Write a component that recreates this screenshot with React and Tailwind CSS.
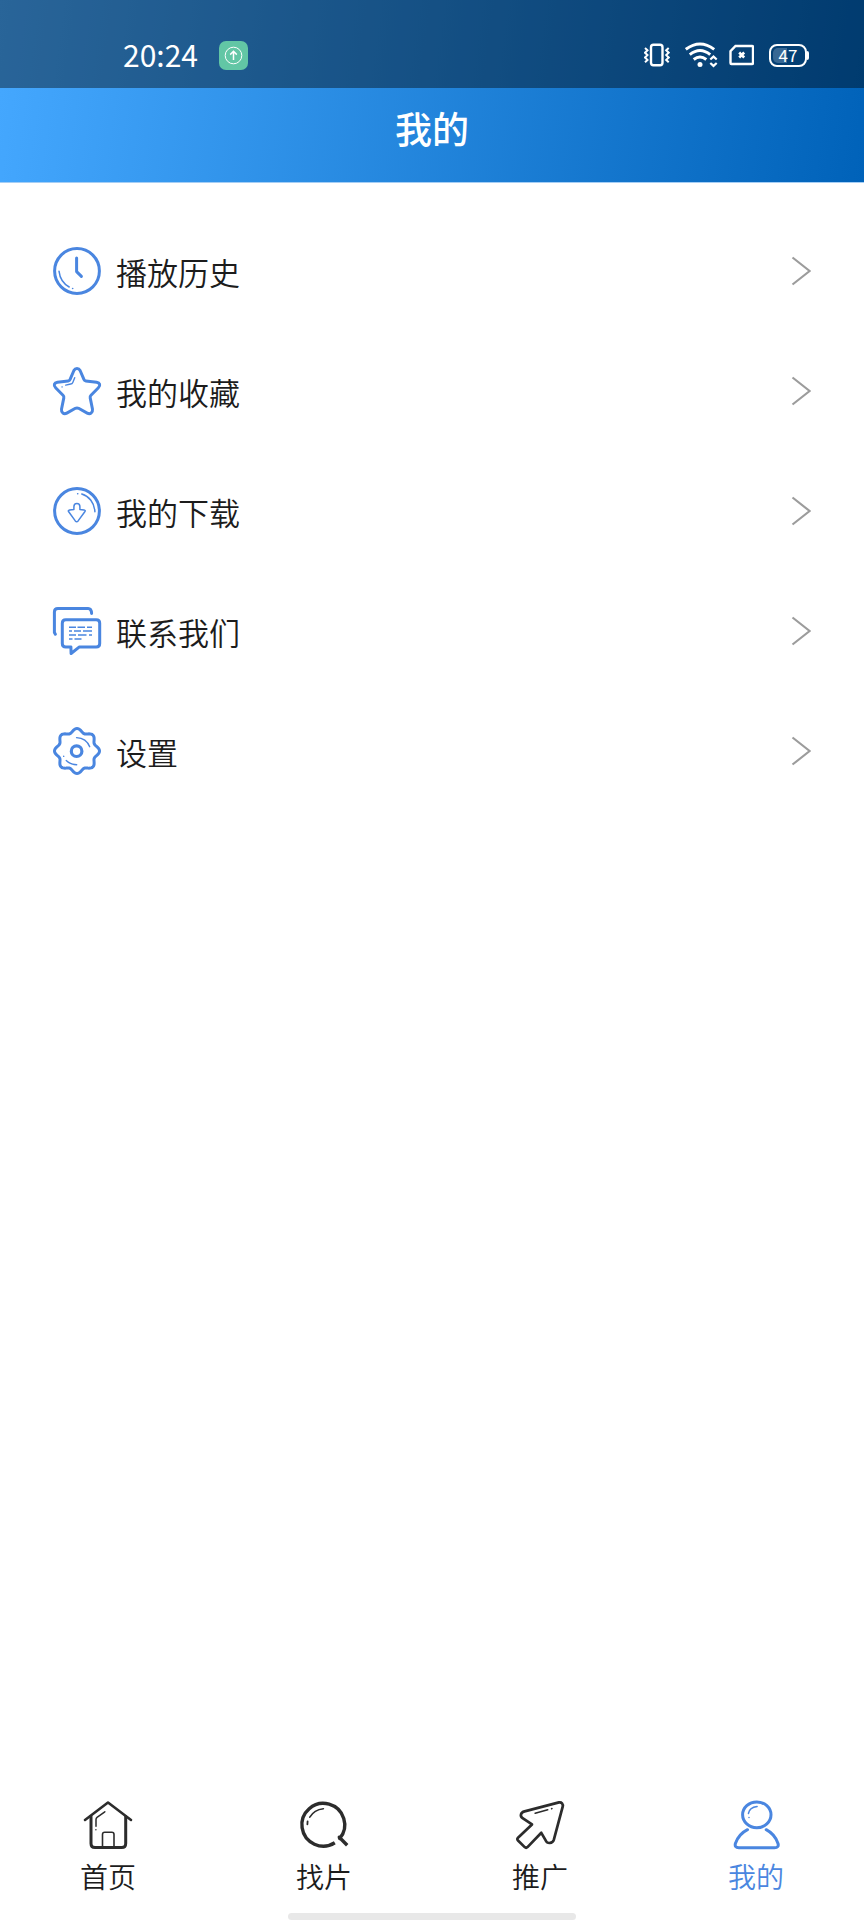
import React from 'react';

const ICON_BLUE = '#4a86e0';
const ICON_DARK = '#2c2c2c';

const Icon = ({ color = ICON_BLUE, children }) => (
  <svg
    className="block h-12 w-12 shrink-0 overflow-visible"
    viewBox="0 0 48 48"
    fill="none"
    stroke={color}
    strokeWidth="3"
    strokeLinecap="round"
    strokeLinejoin="round"
  >
    {children}
  </svg>
);

const ClockIcon = () => (
  <Icon>
    <circle cx="24" cy="24" r="22.4" />
    <path d="M23.6 11v13.6l4.800 4.800" />
    <path d="M6 24.200c.8 7 4.200 12.600 10.200 15.800" strokeWidth="1.500" />
    <path d="M19.600 41.500h.1" strokeWidth="1.600" />
  </Icon>
);

const StarIcon = () => (
  <Icon>
    <path d="M20.900 3.500C22.300 .7 25.700 .7 27.100 3.500L30.800 12.200Q31.300 13.700 32.800 13.900L43.600 15.200C46.900 15.700 47.700 18.500 45.400 20.700L38 28.200Q36.900 29.300 37.200 30.900L39.500 42.300C39.900 45.700 37.200 47.700 34.200 46.100L25.600 41.300Q24 40.500 22.400 41.300L13.800 46.100C10.800 47.700 8.100 45.700 8.500 42.300L10.800 30.900Q11.100 29.300 10 28.200L2.600 20.700C.3 18.500 1.100 15.700 4.400 15.200L15.200 13.900Q16.700 13.700 17.200 12.200Z" />
    <path d="M21.700 10.700l-1.900 4.700q-.6 1.400-2.100 1.600l-5 1.100M9 19.900h.2" strokeWidth="1.400" />
  </Icon>
);

const DownloadIcon = () => (
  <Icon>
    <circle cx="24" cy="24" r="22.400" />
    <path
      d="M20.900 22.400v-2.700q0-3.200 3-3.200t3 3.200v2.700l4.100.5q1.900.4.800 1.900l-6.700 9.100q-1.400 1.700-2.800 0l-6.600-9.100q-1-1.500.9-1.900z"
      strokeWidth="1.500"
    />
    <path d="M28.800 7C36 9.200 41.400 15.600 41.900 24.700M24.600 6.700h.2" strokeWidth="1.500" />
  </Icon>
);

const ChatIcon = () => (
  <Icon>
    <path d="M2.400 27.300L1.400 25.500V4.900q0-3.500 3.500-3.500h30.200q3.300 0 3.500 5" />
    <path d="M12.800 12.700h30.400q3.500 0 3.500 3.500v20.200q0 3.500-3.500 3.500H26.400l-8.300 6.600-.2-6.600h-5.100q-3.500 0-3.500-3.500V16.200q0-3.500 3.500-3.500z" />
    <g strokeWidth="1.500" strokeLinecap="butt">
      <path d="M16 20.300h7M24.500 20.300h7.500M34 20.300h5" />
      <path d="M16 24.100h3M21 24.100h7M30 24.100h9" />
      <path d="M16 28.100h7M25 28.100h8.500M36 28.100h3" />
      <path d="M16 32.100h3.500M21.500 32.100h7" />
    </g>
  </Icon>
);

// eight soft teeth around the hub
const gearPath = Array.from({ length: 144 }, (_, i) => {
  const a = (i / 144) * Math.PI * 2;
  const r = 20.6 + 1.9 * Math.cos(8 * a);
  return `${i ? 'L' : 'M'}${(24 + r * Math.cos(a)).toFixed(2)} ${(24 + r * Math.sin(a)).toFixed(2)}`;
}).join('') + 'Z';

const GearIcon = () => (
  <Icon>
    <path d={gearPath} />
    <circle cx="23.600" cy="24.200" r="5.300" strokeWidth="3.200" />
    <path d="M23.600 10.600c6.400.3 10.900 3.500 13.100 9.100M13.200 33.600q4.500 4.100 10.500 4.100M10.700 29.200v.2" strokeWidth="1.400" />
  </Icon>
);

const HomeIcon = ({ color }) => (
  <Icon color={color}>
    <path d="M1 19L24 1.500 47 19" strokeWidth="2.600" />
    <path d="M7 15.500v27.100q0 4 4 4h26.700q4 0 4-4V15.500" />
    <path d="M18.500 46V33.400q0-2.200 2.200-2.200h7.100q2.200 0 2.200 2.200V46" strokeWidth="1.600" />
    <path d="M20.800 10.800L13 16.300q-1 .8-1 2.100v6.800M11.900 28.700v.1" strokeWidth="1.500" />
  </Icon>
);

const SearchIcon = ({ color }) => (
  <Icon color={color}>
    <path d="M34.800 41.800A21.400 21.400 0 1 1 39.700 37.500L39.300 36.200 47.200 44.200" strokeWidth="3.400" strokeLinecap="butt" />
    <path d="M9.800 16.200q4.300-7.600 13.600-8.500" strokeWidth="1.600" />
    <path d="M7.600 20.300l-.2 3" strokeWidth="1.800" />
  </Icon>
);

const ShareIcon = ({ color }) => (
  <Icon color={color}>
    <path d="M43 1.400L8.600 10.400C4.600 11.400 3.700 15.200 6.600 17.200L16 23.400 2 36.700q-1.400 1.400 0 2.800l6.700 6.600q1.400 1.300 2.800 0L25.300 31.800l4.500 7.900c1.500 3.200 6.700 3.100 8-.8L46.700 5.700C47.300 2.900 45.600 .900 43 1.400z" strokeWidth="2.700" />
    <path d="M19.200 12.300l12.500-3.600M35.600 7.700l.3-.1" strokeWidth="1.600" />
  </Icon>
);

const UserIcon = ({ color }) => (
  <Icon color={color}>
    <ellipse cx="24.800" cy="13.800" rx="14.200" ry="12.900" />
    <path d="M15.500 28.700C9.500 31.700 5.500 36.500 3.400 42.500q-1.100 4.200 3.400 4.200h35.700q4.700 0 3.500-4.200C44 36.500 40 31.700 34.200 28.700" />
    <path d="M16.400 12.500q1-5.900 8.700-6.900M17 16.400v.1" strokeWidth="1.500" />
  </Icon>
);

const menuItems = [
  { label: '播放历史', icon: ClockIcon },
  { label: '我的收藏', icon: StarIcon },
  { label: '我的下载', icon: DownloadIcon },
  { label: '联系我们', icon: ChatIcon },
  { label: '设置', icon: GearIcon },
];

const tabs = [
  { label: '首页', icon: HomeIcon },
  { label: '找片', icon: SearchIcon },
  { label: '推广', icon: ShareIcon },
  { label: '我的', icon: UserIcon, active: true },
];

const StatusBar = () => (
  <div className="flex h-[88px] items-center bg-black/40 pt-[22px] pr-[55px] pl-[123px] text-white">
    <span className="pb-[3px] text-[30px] leading-none">20:24</span>
    <div className="ml-[21px] flex h-[29px] w-[29px] items-center justify-center rounded-[7px] bg-[#62c6a5]">
      <svg className="h-[19px] w-[19px]" viewBox="0 0 19 19" fill="none" stroke="#fff">
        <circle cx="9.5" cy="9.5" r="8.3" strokeWidth="1" />
        <path d="M9.500 14V5.500M6.200 8.600l3.300-3.300 3.300 3.300" strokeWidth="1.500" />
      </svg>
    </div>

    <div className="ml-auto flex items-center">
      {/* vibrate */}
      <svg className="h-6 w-[26px]" viewBox="0 0 26 24" fill="none" stroke="#fff" strokeWidth="2.400">
        <rect x="7" y="1.800" width="11.500" height="20.500" rx="2.500" />
        <path d="M1 5l2.500 2.300L1 9.700l2.500 2.400L1 14.500l2.500 2.400L1 19.200M24.700 5l-2.500 2.300 2.500 2.400-2.500 2.400 2.500 2.400-2.500 2.400 2.500 2.300" strokeWidth="2" />
      </svg>
      {/* wifi */}
      <svg className="ml-[15px] h-[26px] w-[33px]" viewBox="0 0 33 26" fill="none" stroke="#fff" strokeWidth="3">
        <path d="M.8 7.400Q15-3.300 29.200 7.400M4.800 12.600Q15 4.300 25.200 12.600M8.700 17.500Q15 12.500 21.300 17.500" />
        <circle cx="15" cy="22.500" r="2.500" fill="#fff" stroke="none" />
        <path d="M25.300 17.500l3.200-2.900 3.200 2.900M25.300 21l3.200 2.900 3.200-2.900" strokeWidth="2.200" />
      </svg>
      {/* sim */}
      <svg className="ml-[11px] h-[22px] w-[25px]" viewBox="0 0 25 22" fill="none" stroke="#fff" strokeWidth="2.400">
        <path d="M6.500 2H23q1 0 1 1v16q0 1-1 1H2.500q-1 0-1-1V7.200z" />
        <path d="M10.200 8.500l5 5M15.200 8.500l-5 5" strokeWidth="2.600" />
      </svg>
      {/* battery */}
      <div className="ml-[15px] flex items-center">
        <div className="flex h-[23px] w-[38px] items-center justify-center rounded-[8px] border-2 border-white p-[2px]">
          <div className="flex h-full w-full items-center justify-center rounded-[5px] bg-linear-to-r from-[#386894] from-48% to-transparent to-48% pb-[2px] text-[17px] leading-none">
            47
          </div>
        </div>
        <div className="h-[9px] w-[2px] rounded-r-sm bg-white" />
      </div>
    </div>
  </div>
);

const MenuRow = ({ item }) => {
  const RowIcon = item.icon;
  return (
    <li className="flex h-[120px] items-center pr-[53px] pl-[53px]">
      <RowIcon />
      <span className="ml-[15px] text-[31px] leading-none font-[350] text-[#1c1c1c]">{item.label}</span>
      <svg className="ml-auto h-[30px] w-5" viewBox="0 0 20 30" fill="none" stroke="#9c9c9c" strokeWidth="2.200">
        <path d="M1.500 1.500L18.600 15 1.500 28.500" />
      </svg>
    </li>
  );
};

const App = () => {
  return (
    <div className="flex h-[1920px] w-[864px] flex-col overflow-hidden bg-white font-['Noto_Sans_CJK_SC',sans-serif]">
      <header className="h-[183px] shrink-0 border-b border-[#a5cef5] bg-[linear-gradient(98deg,#45a8ff,#0062b9)] bg-origin-border [background-clip:padding-box]">
        <StatusBar />
        <h1 className="pt-[20px] text-center text-[37px] leading-[40px] font-medium text-white">我的</h1>
      </header>

      <main className="flex-1 pt-[28px]">
        <ul>
          {menuItems.map((item) => (
            <MenuRow key={item.label} item={item} />
          ))}
        </ul>
      </main>

      <nav className="grid h-[112px] shrink-0 grid-cols-4">
        {tabs.map((tab) => {
          const TabIcon = tab.icon;
          return (
            <a key={tab.label} className={`flex flex-col items-center ${tab.active ? 'text-[#4a86e0]' : 'text-[#1c1c1c]'}`}>
              <TabIcon color={tab.active ? ICON_BLUE : ICON_DARK} />
              <span className="mt-[13px] text-[28px] leading-none font-[350]">{tab.label}</span>
            </a>
          );
        })}
      </nav>
      <div className="mx-auto h-[7px] w-[288px] shrink-0 rounded-full bg-[#e8e8e8]" />
    </div>
  );
};

export default App;
